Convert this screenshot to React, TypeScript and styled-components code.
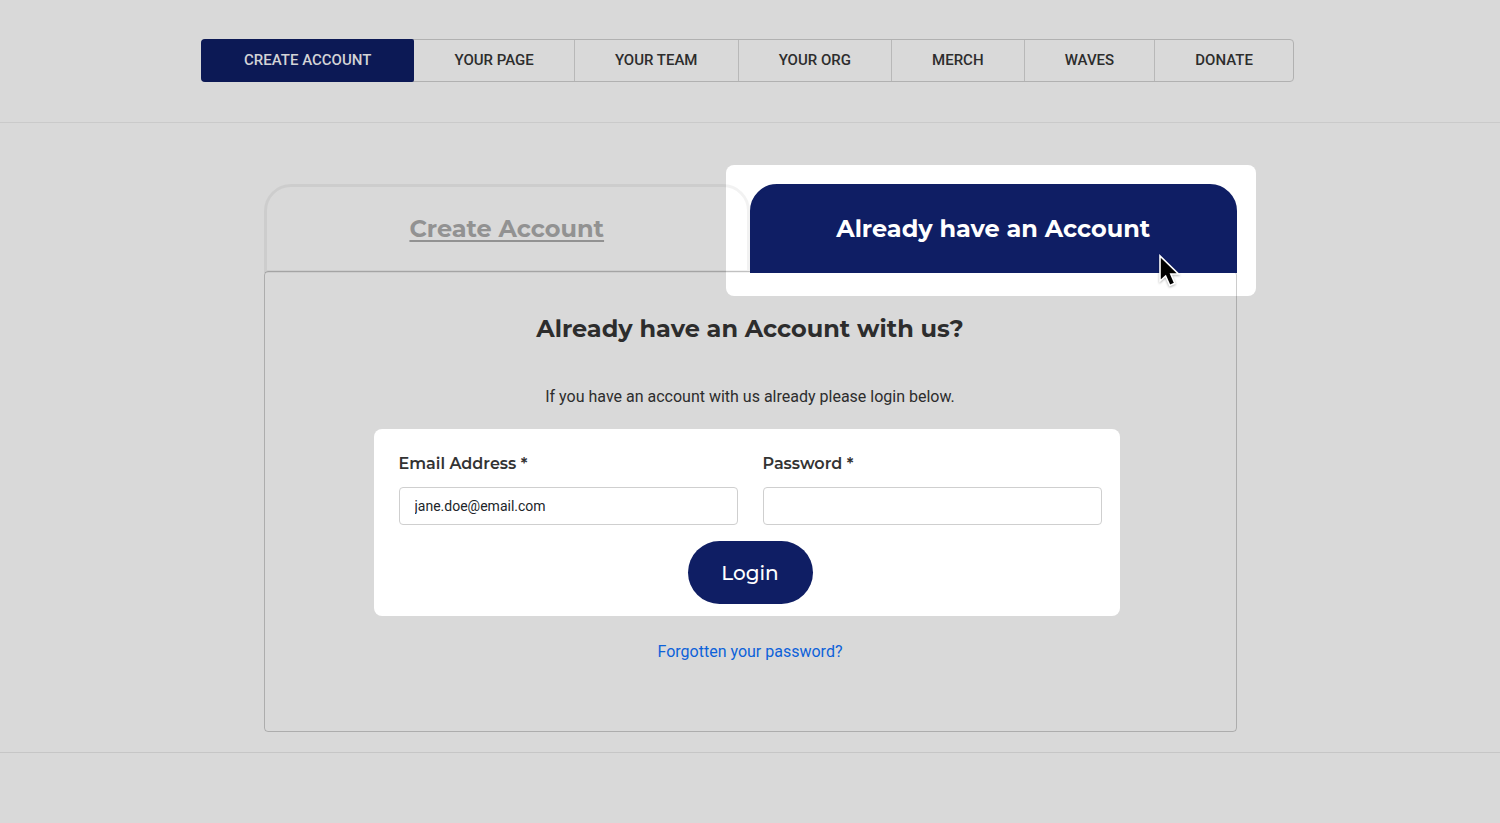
import React, { useState } from "react";
import styled, { createGlobalStyle } from "styled-components";

const colors = {
  page: "#d9d9d9",
  navy: "#0f1e64",
  navyDim: "#0c1955",
  ink: "#2d2d2d",
  line: "rgba(0, 0, 0, 0.2)",
  faint: "rgba(0, 0, 0, 0.05)",
};

const heading = `Montserrat, Inter, "Open Sans", sans-serif`;
const body = `Roboto, "Liberation Sans", sans-serif`;

const GlobalStyle = createGlobalStyle`
  *, *::before, *::after { box-sizing: border-box; }
  body {
    margin: 0;
    background: ${colors.page};
    color: ${colors.ink};
    font-family: ${body};
    font-size: 16px;
  }
`;

const Header = styled.header`
  display: flex;
  justify-content: center;
  padding: 39px 21px 40px 16px;
  border-bottom: 1px solid #cacaca;
`;

const StepNav = styled.nav`
  display: flex;
  width: 100%;
  max-width: 1093px;
  height: 43px;
  border: 1px solid #b1b1b1;
  border-radius: 4px;
`;

const Step = styled.a<{ $current?: boolean }>`
  display: flex;
  flex: 1 1 auto;
  align-items: center;
  justify-content: center;
  margin: ${(p) => (p.$current ? "-1px 0 -1px -1px" : "0")};
  padding: ${(p) => (p.$current ? "0 42px 1px" : "0 39px 1px")};
  border-radius: ${(p) => (p.$current ? "4px 2px 2px 4px" : "0")};
  background: ${(p) => (p.$current ? colors.navyDim : "transparent")};
  color: ${(p) => (p.$current ? "#d3d3d6" : colors.ink)};
  font-size: 15px;
  font-weight: 500;
  text-decoration: none;
  white-space: nowrap;

  & + & {
    border-left: 1px solid #b8b8b8;
  }
  &:nth-child(2) {
    border-left: 0;
  }
`;

const Main = styled.main`
  display: flex;
  justify-content: center;
  padding: 61px 16px 20px;
  border-bottom: 1px solid #c6c6c6;
`;

const Account = styled.div`
  width: 100%;
  max-width: 973px;
  isolation: isolate;
`;

const Tabs = styled.div`
  display: grid;
  grid-template-columns: 1fr 1fr;
`;

const Tab = styled.button<{ $active?: boolean }>`
  position: relative;
  height: 89px;
  padding: 0;
  border: 3px solid ${(p) => (p.$active ? colors.navy : colors.faint)};
  border-radius: 27px 27px 0 0;
  background: ${(p) => (p.$active ? colors.navy : "transparent")};
  color: ${(p) => (p.$active ? "#fff" : "#929292")};
  font: 700 24px/30px ${heading};
  text-decoration: ${(p) => (p.$active ? "none" : "underline")};
  text-decoration-thickness: 2px;
  text-underline-offset: 3px;
`;

const TabSlot = styled.div<{ $spotlit?: boolean }>`
  position: relative;
  display: grid;

  &::before {
    content: "";
    display: ${(p) => (p.$spotlit ? "block" : "none")};
    position: absolute;
    z-index: -1;
    inset: -19px -19px -23px -24px;
    border-radius: 8px;
    background: #fff;
  }
`;

const Pointer = styled.svg`
  position: absolute;
  right: 55px;
  bottom: -16px;
  width: 24px;
  height: 35px;
  filter: drop-shadow(0 1px 1px rgba(0, 0, 0, 0.3));
`;

const Panel = styled.section`
  display: flex;
  flex-direction: column;
  align-items: center;
  margin-top: -2px;
  padding: 41px 134px 67px;
  border: 1px solid ${colors.line};
  border-radius: 4px;
`;

const Title = styled.h1`
  margin: 0;
  font: 700 24px/32px ${heading};
`;

const Lead = styled.p`
  margin: 40px 0 20px;
  line-height: 24px;
`;

const LoginForm = styled.form`
  display: flex;
  flex-direction: column;
  align-items: center;
  align-self: stretch;
  gap: 16px;
  margin: 0 -18px 0 -25px;
  padding: 23px 18px 12px 25px;
  border-radius: 8px;
  background: #fff;
`;

const Fields = styled.div`
  display: grid;
  grid-template-columns: 1fr 1fr;
  gap: 25px;
  width: 100%;
`;

const Field = styled.div`
  display: flex;
  flex-direction: column;
  gap: 11px;
`;

const Label = styled.label`
  font: 600 16px/24px ${heading};
  color: #333;
`;

const Input = styled.input`
  width: 100%;
  height: 38px;
  padding: 0 15px;
  border: 1px solid #cfcfcf;
  border-radius: 4px;
  background: #fff;
  color: #212529;
  font: 400 14px/20px ${body};
`;

const LoginButton = styled.button`
  width: 125px;
  height: 63px;
  border: 0;
  border-radius: 32px;
  background: ${colors.navy};
  color: #fff;
  font: 500 20px/28px ${heading};
`;

const ForgotLink = styled.a`
  margin-top: 24px;
  color: #0d62d9;
  line-height: 24px;
  text-decoration: none;
`;

const steps = ["CREATE ACCOUNT", "YOUR PAGE", "YOUR TEAM", "YOUR ORG", "MERCH", "WAVES", "DONATE"];

export default function App() {
  const [email, setEmail] = useState("jane.doe@email.com");
  const [password, setPassword] = useState("");

  return (
    <>
      <GlobalStyle />
      <Header>
        <StepNav aria-label="Registration steps">
          {steps.map((step, i) => (
            <Step key={step} href="#" $current={i === 0} aria-current={i === 0 ? "step" : undefined}>
              {step}
            </Step>
          ))}
        </StepNav>
      </Header>
      <Main>
        <Account>
          <Tabs role="tablist">
            <TabSlot role="presentation">
              <Tab type="button" role="tab" aria-selected={false}>
                Create Account
              </Tab>
            </TabSlot>
            <TabSlot role="presentation" $spotlit>
              <Tab type="button" role="tab" aria-selected $active>
                Already have an Account
              </Tab>
              <Pointer viewBox="0 0 24 35" aria-hidden="true">
                <path
                  d="M2 2 L2 27 L7.600 22 L11.800 31.500 L16.800 29.300 L12.800 20 L20.500 20 Z"
                  fill="#000"
                  stroke="#fff"
                  strokeWidth="1.600"
                />
              </Pointer>
            </TabSlot>
          </Tabs>
          <Panel role="tabpanel">
            <Title>Already have an Account with us?</Title>
            <Lead>If you have an account with us already please login below.</Lead>
            <LoginForm onSubmit={(e: React.FormEvent) => e.preventDefault()}>
              <Fields>
                <Field>
                  <Label htmlFor="email">Email Address *</Label>
                  <Input id="email" type="email" value={email} onChange={(e) => setEmail(e.target.value)} />
                </Field>
                <Field>
                  <Label htmlFor="password">Password *</Label>
                  <Input
                    id="password"
                    type="password"
                    value={password}
                    onChange={(e) => setPassword(e.target.value)}
                  />
                </Field>
              </Fields>
              <LoginButton type="submit">Login</LoginButton>
            </LoginForm>
            <ForgotLink href="#">Forgotten your password?</ForgotLink>
          </Panel>
        </Account>
      </Main>
    </>
  );
}
